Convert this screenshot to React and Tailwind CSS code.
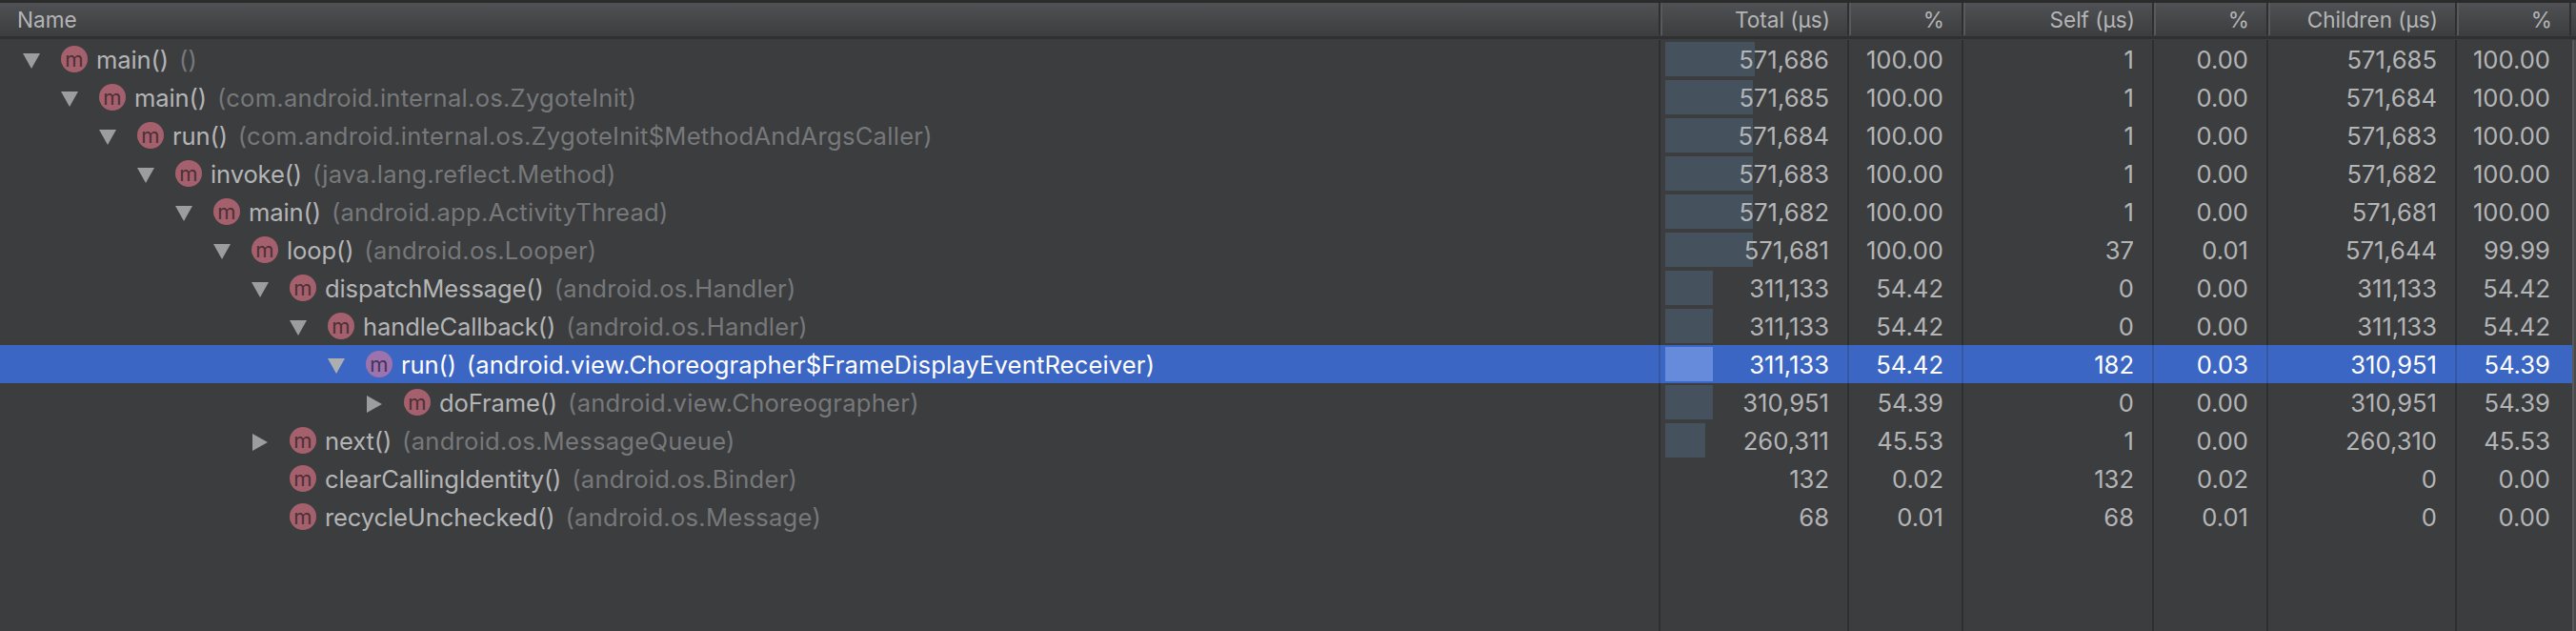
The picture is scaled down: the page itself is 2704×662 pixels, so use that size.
const FONT = "font-['Inter','Liberation_Sans',sans-serif]";

const rows = [
  { d: 0, o: 'down', n: 'main()', c: '()', t: '571,686', tp: '100.00', s: '1', sp: '0.00', k: '571,685', kp: '100.00', b: 94 },
  { d: 1, o: 'down', n: 'main()', c: '(com.android.internal.os.ZygoteInit)', t: '571,685', tp: '100.00', s: '1', sp: '0.00', k: '571,684', kp: '100.00', b: 92 },
  { d: 2, o: 'down', n: 'run()', c: '(com.android.internal.os.ZygoteInit$MethodAndArgsCaller)', t: '571,684', tp: '100.00', s: '1', sp: '0.00', k: '571,683', kp: '100.00', b: 92 },
  { d: 3, o: 'down', n: 'invoke()', c: '(java.lang.reflect.Method)', t: '571,683', tp: '100.00', s: '1', sp: '0.00', k: '571,682', kp: '100.00', b: 92 },
  { d: 4, o: 'down', n: 'main()', c: '(android.app.ActivityThread)', t: '571,682', tp: '100.00', s: '1', sp: '0.00', k: '571,681', kp: '100.00', b: 92 },
  { d: 5, o: 'down', n: 'loop()', c: '(android.os.Looper)', t: '571,681', tp: '100.00', s: '37', sp: '0.01', k: '571,644', kp: '99.99', b: 92 },
  { d: 6, o: 'down', n: 'dispatchMessage()', c: '(android.os.Handler)', t: '311,133', tp: '54.42', s: '0', sp: '0.00', k: '311,133', kp: '54.42', b: 50 },
  { d: 7, o: 'down', n: 'handleCallback()', c: '(android.os.Handler)', t: '311,133', tp: '54.42', s: '0', sp: '0.00', k: '311,133', kp: '54.42', b: 50 },
  { d: 8, o: 'down', n: 'run()', c: '(android.view.Choreographer$FrameDisplayEventReceiver)', t: '311,133', tp: '54.42', s: '182', sp: '0.03', k: '310,951', kp: '54.39', b: 50, sel: true },
  { d: 9, o: 'right', n: 'doFrame()', c: '(android.view.Choreographer)', t: '310,951', tp: '54.39', s: '0', sp: '0.00', k: '310,951', kp: '54.39', b: 50 },
  { d: 6, o: 'right', n: 'next()', c: '(android.os.MessageQueue)', t: '260,311', tp: '45.53', s: '1', sp: '0.00', k: '260,310', kp: '45.53', b: 42 },
  { d: 6, n: 'clearCallingIdentity()', c: '(android.os.Binder)', t: '132', tp: '0.02', s: '132', sp: '0.02', k: '0', kp: '0.00', b: 0 },
  { d: 6, n: 'recycleUnchecked()', c: '(android.os.Message)', t: '68', tp: '0.01', s: '68', sp: '0.01', k: '0', kp: '0.00', b: 0 },
];

function Arrow({ dir, sel }) {
  const fill = sel ? '#adaeaf' : '#9c9d9e';
  return (
    <svg width="18" height="18" viewBox="0 0 18 18" className="shrink-0 translate-y-0.5">
      {dir === 'down' ? (
        <polygon points="0,1 18,1 9,17" fill={fill} />
      ) : (
        <polygon points="1,0 17,9 1,18" fill={fill} />
      )}
    </svg>
  );
}

function MethodIcon({ sel }) {
  return (
    <span
      className={`flex h-7 w-7 shrink-0 items-center justify-center rounded-full pb-px text-[22px] leading-none tracking-normal ${
        sel ? 'bg-[#9c73ad] text-[#46335a]' : 'bg-[#a4616d] text-[#4f2f36]'
      }`}
    >
      m
    </span>
  );
}

function Head({ w, children }) {
  return (
    <div className={`flex h-[34px] shrink-0 items-center justify-end border-l-2 border-r-2 border-l-[#58595b] border-r-[#2e2f30] pr-[18px] pt-px ${w}`}>
      {children}
    </div>
  );
}

function Cell({ w, sel, children, pr = 'pr-[19px]', last, h = 'h-10' }) {
  return (
    <div
      className={`relative flex shrink-0 items-center justify-end ${h} ${w} ${pr} ${
        last ? '' : `border-r-2 ${sel ? 'border-[#3558a3]' : 'border-[#2e2f30]'}`
      }`}
    >
      {children}
    </div>
  );
}

function Stripe() {
  return (
    <div className="flex w-1 shrink-0">
      <div className="w-0.5 bg-[#58595b]" />
      <div className="w-0.5 bg-[#48494b]" />
    </div>
  );
}

export default function App() {
  return (
    <div className={`${FONT} flex h-[662px] w-[2704px] flex-col overflow-hidden bg-[#3c3d3f] text-[25.6px] text-[#b4b5b6]`}>
      <div className="h-[3px] shrink-0 bg-[#2b2b2b]" />
      <div className="flex h-[35px] shrink-0 items-start bg-gradient-to-b from-[#505154] to-[#3c3d3f] text-[22.6px]">
        <div className="flex h-[34px] w-[1743px] shrink-0 items-center border-r-2 border-[#2e2f30] pl-[18px] pt-px">Name</div>
        <Head w="w-[198px]">Total (µs)</Head>
        <Head w="w-[120px]">%</Head>
        <Head w="w-[200px]">Self (µs)</Head>
        <Head w="w-[120px]">%</Head>
        <Head w="w-[198px]">Children (µs)</Head>
        <Head w="w-[120px]">%</Head>
      </div>
      <div className="h-[3px] shrink-0 bg-[#2f3031]" />
      <div className="h-px shrink-0" />
      <div className="flex flex-col">
        {rows.map((r, i) => (
          <div key={i} className={`flex h-10 ${r.sel ? 'bg-[#3c66c4] text-white' : ''}`}>
            <div
              className={`flex h-10 w-[1743px] shrink-0 items-center border-r-2 ${r.sel ? 'border-[#3558a3]' : 'border-[#2e2f30]'}`}
              style={{ paddingLeft: 24 + r.d * 40 }}
            >
              <span className="flex w-10 shrink-0 items-center">{r.o ? <Arrow dir={r.o} sel={r.sel} /> : null}</span>
              <MethodIcon sel={r.sel} />
              <span className="ml-[9px] pt-0.5 tracking-[-0.15px]">{r.n}</span>
              <span className={`ml-[11px] pt-0.5 ${r.sel ? 'text-white tracking-[0.13px]' : 'text-[#77787a] tracking-[0.25px]'}`}>{r.c}</span>
            </div>
            <Cell w="w-[198px]" sel={r.sel}>
              {r.b > 0 && (
                <div
                  className={`absolute left-[5px] top-0.5 h-9 ${r.sel ? 'bg-[#668bdb]' : 'bg-[#45525e]'}`}
                  style={{ width: r.b }}
                />
              )}
              <span className="relative pt-0.5">{r.t}</span>
            </Cell>
            <Cell w="w-[120px]" sel={r.sel}><span className="pt-0.5">{r.tp}</span></Cell>
            <Cell w="w-[200px]" sel={r.sel}><span className="pt-0.5">{r.s}</span></Cell>
            <Cell w="w-[120px]" sel={r.sel}><span className="pt-0.5">{r.sp}</span></Cell>
            <Cell w="w-[198px]" sel={r.sel}><span className="pt-0.5">{r.k}</span></Cell>
            <Cell w="w-[121px]" sel={r.sel} pr="pr-[23px]" last><span className="pt-0.5">{r.kp}</span></Cell>
            <Stripe />
          </div>
        ))}
      </div>
      <div className="flex min-h-0 flex-1">
        <Cell w="w-[1743px]" h="h-full" />
        <Cell w="w-[198px]" h="h-full" />
        <Cell w="w-[120px]" h="h-full" />
        <Cell w="w-[200px]" h="h-full" />
        <Cell w="w-[120px]" h="h-full" />
        <Cell w="w-[198px]" h="h-full" />
        <Cell w="w-[121px]" h="h-full" last />
        <Stripe />
      </div>
    </div>
  );
}
